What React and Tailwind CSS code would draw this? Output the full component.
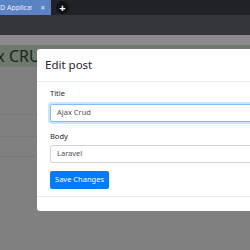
export default function App() {
  return (
    <div className="w-[250px] h-[250px] overflow-hidden bg-[#808080] relative" style={{ fontFamily: '"Noto Sans", "Open Sans", sans-serif' }}>
      {/* browser tab strip */}
      <div className="h-[15px] bg-[#202227] flex items-center">
        <div className="w-[51px] h-[15px] bg-[#5b83c4] flex items-center justify-between pr-[6px]">
          <span className="text-[7px] leading-none text-[#e8eefa] whitespace-nowrap overflow-hidden w-[32px]">D Application</span>
          <span className="text-[8px] leading-none text-[#e8eefa]">×</span>
        </div>
        <div className="ml-[5px] w-[13px] h-[13px] rounded-full bg-[#111216] flex items-center justify-center text-white text-[11px] leading-none font-bold">+</div>
      </div>
      {/* toolbar */}
      <div className="h-[20px] bg-[#35363b]" />
      {/* page (dimmed) */}
      <div className="h-[10px] bg-[#8a8a8a]" />
      <div className="h-[22px] bg-[#6e7b6c] flex items-center overflow-hidden">
        <span className="ml-[-27px] text-[16px] leading-none text-[#1d251c] whitespace-nowrap">Ajax CRUD</span>
      </div>
      <div className="h-[48px] border-b border-[#787878]" />
      <div className="h-[22px] border-b border-[#787878]" />
      <div className="h-[20px] border-b border-[#787878]" />

      {/* modal */}
      <div className="absolute left-[37px] top-[49px] w-[240px] h-[162px] bg-white rounded-[3px] text-[#212529]">
        <div className="h-[33px] border-b border-[#e9ecef] flex items-center pl-[8px]">
          <span className="text-[11.5px] leading-none">Edit post</span>
        </div>
        <div className="pl-[13px] pt-[8px]">
          <div className="text-[7.5px] leading-none mb-[6px]">Title</div>
          <div className="h-[18px] border border-[#80bdff] rounded-[2px] shadow-[0_0_0_2px_rgba(0,123,255,0.2)] flex items-center pl-[6px] text-[7.5px] text-[#495057]">Ajax Crud</div>
          <div className="text-[7.5px] leading-none mt-[11px] mb-[5px]">Body</div>
          <div className="h-[18px] border border-[#ced4da] rounded-[2px] flex items-center pl-[6px] text-[7.5px] text-[#495057]">Laravel</div>
          <div className="mt-[8px] w-[59px] h-[18px] bg-[#007bff] rounded-[2px] flex items-center justify-center text-white text-[7.5px]">Save Changes</div>
        </div>
        <div className="mt-[7px] border-t border-[#e9ecef]" />
      </div>
    </div>
  );
}
